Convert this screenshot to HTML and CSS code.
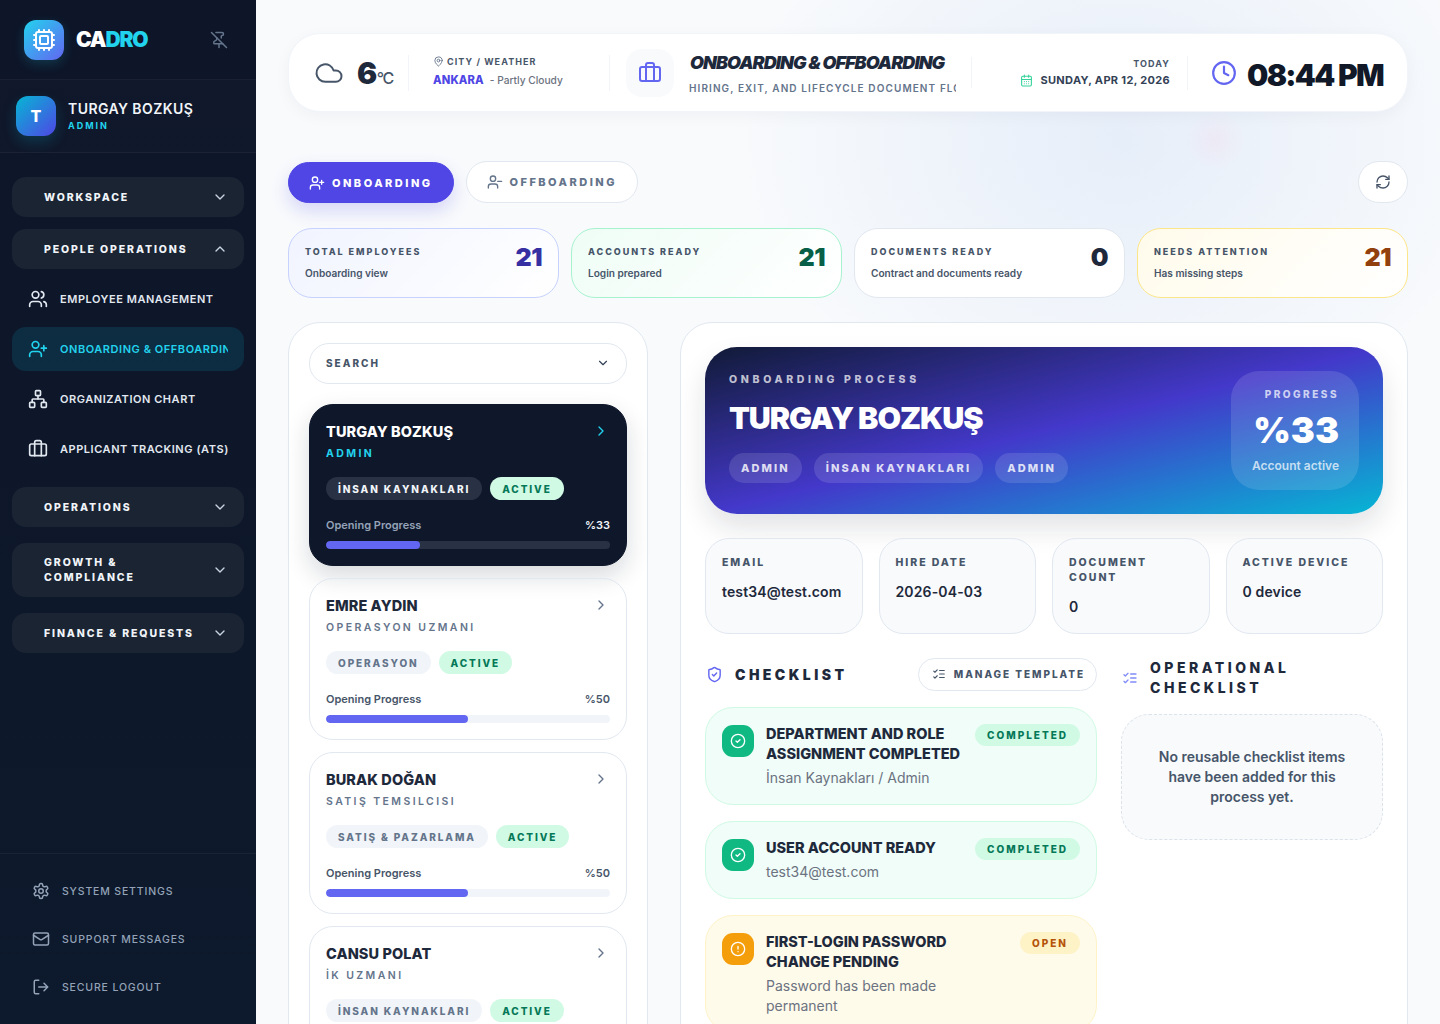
FILE: index.html
```html
<!DOCTYPE html>
<html lang="en">
<head>
<meta charset="utf-8">
<title>Cadro</title>
<link rel="stylesheet" href="styles.css">
</head>
<body>
<svg class="sprite" xmlns="http://www.w3.org/2000/svg">
<symbol id="cpu" viewBox="0 0 24 24"><rect width="16" height="16" x="4" y="4" rx="2"/><rect width="8" height="8" x="8" y="8" rx="1"/><path d="M12 2v2M12 20v2M2 12h2M20 12h2M17 2v2M17 20v2M2 17h2M2 7h2M20 17h2M20 7h2M7 2v2M7 20v2"/></symbol>
<symbol id="pinoff" viewBox="0 0 24 24"><path d="M12 17v5"/><path d="M15 9.34V7a1 1 0 0 1 1-1 2 2 0 0 0 0-4H7.89"/><path d="m2 2 20 20"/><path d="M9 9v1.76a2 2 0 0 1-1.11 1.79l-1.78.9A2 2 0 0 0 5 15.24V16a1 1 0 0 0 1 1h11"/></symbol>
<symbol id="down" viewBox="0 0 24 24"><path d="m6 9 6 6 6-6"/></symbol>
<symbol id="up" viewBox="0 0 24 24"><path d="m18 15-6-6-6 6"/></symbol>
<symbol id="right" viewBox="0 0 24 24"><path d="m9 18 6-6-6-6"/></symbol>
<symbol id="users" viewBox="0 0 24 24"><path d="M16 21v-2a4 4 0 0 0-4-4H6a4 4 0 0 0-4 4v2"/><circle cx="9" cy="7" r="4"/><path d="M22 21v-2a4 4 0 0 0-3-3.87"/><path d="M16 3.13a4 4 0 0 1 0 7.75"/></symbol>
<symbol id="userplus" viewBox="0 0 24 24"><path d="M16 21v-2a4 4 0 0 0-4-4H6a4 4 0 0 0-4 4v2"/><circle cx="9" cy="7" r="4"/><path d="M19 8v6M22 11h-6"/></symbol>
<symbol id="userminus" viewBox="0 0 24 24"><path d="M16 21v-2a4 4 0 0 0-4-4H6a4 4 0 0 0-4 4v2"/><circle cx="9" cy="7" r="4"/><path d="M22 11h-6"/></symbol>
<symbol id="network" viewBox="0 0 24 24"><rect x="16" y="16" width="6" height="6" rx="1"/><rect x="2" y="16" width="6" height="6" rx="1"/><rect x="9" y="2" width="6" height="6" rx="1"/><path d="M5 16v-3a1 1 0 0 1 1-1h12a1 1 0 0 1 1 1v3"/><path d="M12 12V8"/></symbol>
<symbol id="briefcase" viewBox="0 0 24 24"><path d="M16 20V4a2 2 0 0 0-2-2h-4a2 2 0 0 0-2 2v16"/><rect width="20" height="14" x="2" y="6" rx="2"/></symbol>
<symbol id="settings" viewBox="0 0 24 24"><path d="M12.22 2h-.44a2 2 0 0 0-2 2v.18a2 2 0 0 1-1 1.73l-.43.25a2 2 0 0 1-2 0l-.15-.08a2 2 0 0 0-2.73.73l-.22.38a2 2 0 0 0 .73 2.73l.15.1a2 2 0 0 1 1 1.72v.51a2 2 0 0 1-1 1.74l-.15.09a2 2 0 0 0-.73 2.73l.22.38a2 2 0 0 0 2.73.73l.15-.08a2 2 0 0 1 2 0l.43.25a2 2 0 0 1 1 1.73V20a2 2 0 0 0 2 2h.44a2 2 0 0 0 2-2v-.18a2 2 0 0 1 1-1.73l.43-.25a2 2 0 0 1 2 0l.15.08a2 2 0 0 0 2.73-.73l.22-.39a2 2 0 0 0-.73-2.73l-.15-.08a2 2 0 0 1-1-1.74v-.5a2 2 0 0 1 1-1.74l.15-.09a2 2 0 0 0 .73-2.73l-.22-.38a2 2 0 0 0-2.73-.73l-.15.08a2 2 0 0 1-2 0l-.43-.25a2 2 0 0 1-1-1.73V4a2 2 0 0 0-2-2z"/><circle cx="12" cy="12" r="3"/></symbol>
<symbol id="mail" viewBox="0 0 24 24"><rect width="20" height="16" x="2" y="4" rx="2"/><path d="m22 7-8.97 5.7a1.94 1.94 0 0 1-2.06 0L2 7"/></symbol>
<symbol id="logout" viewBox="0 0 24 24"><path d="M9 21H5a2 2 0 0 1-2-2V5a2 2 0 0 1 2-2h4"/><path d="m16 17 5-5-5-5M21 12H9"/></symbol>
<symbol id="cloud" viewBox="0 0 24 24"><path d="M17.5 19H9a7 7 0 1 1 6.71-9h1.79a4.5 4.5 0 1 1 0 9Z"/></symbol>
<symbol id="mappin" viewBox="0 0 24 24"><path d="M20 10c0 6-8 12-8 12s-8-6-8-12a8 8 0 0 1 16 0Z"/><circle cx="12" cy="10" r="3"/></symbol>
<symbol id="calendar" viewBox="0 0 24 24"><path d="M8 2v4M16 2v4"/><rect width="18" height="18" x="3" y="4" rx="2"/><path d="M3 10h18M8 14h.01M12 14h.01M16 14h.01M8 18h.01M12 18h.01M16 18h.01"/></symbol>
<symbol id="clock" viewBox="0 0 24 24"><circle cx="12" cy="12" r="10"/><path d="M12 6v6l4 2"/></symbol>
<symbol id="refresh" viewBox="0 0 24 24"><path d="M3 12a9 9 0 0 1 9-9 9.75 9.75 0 0 1 6.74 2.74L21 8"/><path d="M21 3v5h-5"/><path d="M21 12a9 9 0 0 1-9 9 9.75 9.75 0 0 1-6.74-2.74L3 16"/><path d="M8 16H3v5"/></symbol>
<symbol id="shield" viewBox="0 0 24 24"><path d="M20 13c0 5-3.5 7.5-7.66 8.95a1 1 0 0 1-.67-.01C7.5 20.5 4 18 4 13V6a1 1 0 0 1 1-1c2 0 4.5-1.2 6.24-2.72a1.17 1.17 0 0 1 1.52 0C14.51 3.81 17 5 19 5a1 1 0 0 1 1 1z"/><path d="m9 12 2 2 4-4"/></symbol>
<symbol id="listchecks" viewBox="0 0 24 24"><path d="m3 17 2 2 4-4"/><path d="m3 7 2 2 4-4"/><path d="M13 6h8M13 12h8M13 18h8"/></symbol>
<symbol id="check" viewBox="0 0 24 24"><circle cx="12" cy="12" r="10"/><path d="m9 12 2 2 4-4"/></symbol>
<symbol id="alert" viewBox="0 0 24 24"><circle cx="12" cy="12" r="10"/><path d="M12 8v4M12 16h.01"/></symbol>
</svg>

<div class="app">
  <aside class="sidebar">
    <div class="brand">
      <div class="logo"><svg class="ico ico-24"><use href="#cpu"/></svg></div>
      <div class="brand-name">CA<span>DRO</span></div>
      <svg class="ico ico-18 pin"><use href="#pinoff"/></svg>
    </div>
    <div class="profile">
      <div class="avatar">T</div>
      <div>
        <div class="profile-name">TURGAY BOZKUŞ</div>
        <div class="profile-role">ADMIN</div>
      </div>
    </div>
    <nav class="nav">
      <div class="group group-first"><span>WORKSPACE</span><svg class="ico ico-16"><use href="#down"/></svg></div>
      <div class="group"><span>PEOPLE OPERATIONS</span><svg class="ico ico-16"><use href="#up"/></svg></div>
      <div class="items">
        <div class="item"><svg class="ico ico-20"><use href="#users"/></svg><span>EMPLOYEE MANAGEMENT</span></div>
        <div class="item item-active"><svg class="ico ico-20"><use href="#userplus"/></svg><span>ONBOARDING &amp; OFFBOARDING</span></div>
        <div class="item"><svg class="ico ico-20"><use href="#network"/></svg><span>ORGANIZATION CHART</span></div>
        <div class="item"><svg class="ico ico-20"><use href="#briefcase"/></svg><span>APPLICANT TRACKING (ATS)</span></div>
      </div>
      <div class="group"><span>OPERATIONS</span><svg class="ico ico-16"><use href="#down"/></svg></div>
      <div class="group group-tall"><span>GROWTH &amp;<br>COMPLIANCE</span><svg class="ico ico-16"><use href="#down"/></svg></div>
      <div class="group"><span>FINANCE &amp; REQUESTS</span><svg class="ico ico-16"><use href="#down"/></svg></div>
    </nav>
    <div class="side-foot">
      <div class="foot-item"><svg class="ico ico-18"><use href="#settings"/></svg><span>SYSTEM SETTINGS</span></div>
      <div class="foot-item"><svg class="ico ico-18"><use href="#mail"/></svg><span>SUPPORT MESSAGES</span></div>
      <div class="foot-item"><svg class="ico ico-18"><use href="#logout"/></svg><span>SECURE LOGOUT</span></div>
    </div>
  </aside>

  <main class="main">
    <header class="topbar">
      <div class="weather">
        <svg class="ico cloud-ico"><use href="#cloud"/></svg>
        <div class="temp">6<span>°C</span></div>
      </div>
      <div class="city">
        <div class="city-label"><svg class="ico ico-11"><use href="#mappin"/></svg>CITY / WEATHER</div>
        <div class="city-line"><b>ANKARA</b><span>- Partly Cloudy</span></div>
      </div>
      <div class="page-icon"><svg class="ico ico-24"><use href="#briefcase"/></svg></div>
      <div class="page-title">
        <h1>ONBOARDING &amp; OFFBOARDING</h1>
        <p>HIRING, EXIT, AND LIFECYCLE DOCUMENT FLOW</p>
      </div>
      <div class="today">
        <div class="today-label">TODAY</div>
        <div class="today-date"><svg class="ico ico-13"><use href="#calendar"/></svg>SUNDAY, APR 12, 2026</div>
      </div>
      <div class="time"><svg class="ico ico-26"><use href="#clock"/></svg><span>08:44 PM</span></div>
    </header>

    <div class="tabs">
      <button class="tab tab-on"><svg class="ico ico-16"><use href="#userplus"/></svg>ONBOARDING</button>
      <button class="tab"><svg class="ico ico-16"><use href="#userminus"/></svg>OFFBOARDING</button>
      <button class="refresh"><svg class="ico ico-16"><use href="#refresh"/></svg></button>
    </div>

    <section class="stats">
      <div class="stat stat-indigo"><div><h3>TOTAL EMPLOYEES</h3><p>Onboarding view</p></div><strong>21</strong></div>
      <div class="stat stat-green"><div><h3>ACCOUNTS READY</h3><p>Login prepared</p></div><strong>21</strong></div>
      <div class="stat stat-plain"><div><h3>DOCUMENTS READY</h3><p>Contract and documents ready</p></div><strong>0</strong></div>
      <div class="stat stat-amber"><div><h3>NEEDS ATTENTION</h3><p>Has missing steps</p></div><strong>21</strong></div>
    </section>

    <section class="columns">
      <div class="panel list-panel">
        <div class="search"><span>SEARCH</span><svg class="ico ico-14"><use href="#down"/></svg></div>
        <article class="person person-on">
          <div class="person-head"><h4>TURGAY BOZKUŞ</h4><svg class="ico ico-16"><use href="#right"/></svg></div>
          <div class="person-role">ADMIN</div>
          <div class="chips"><span class="chip">İNSAN KAYNAKLARI</span><span class="chip chip-green">ACTIVE</span></div>
          <div class="prog-row"><span>Opening Progress</span><span class="prog-val">%33</span></div>
          <div class="bar"><i class="fill" style="width:33%"></i></div>
        </article>
        <article class="person">
          <div class="person-head"><h4>EMRE AYDIN</h4><svg class="ico ico-16"><use href="#right"/></svg></div>
          <div class="person-role">OPERASYON UZMANI</div>
          <div class="chips"><span class="chip">OPERASYON</span><span class="chip chip-green">ACTIVE</span></div>
          <div class="prog-row"><span>Opening Progress</span><span class="prog-val">%50</span></div>
          <div class="bar"><i class="fill" style="width:50%"></i></div>
        </article>
        <article class="person">
          <div class="person-head"><h4>BURAK DOĞAN</h4><svg class="ico ico-16"><use href="#right"/></svg></div>
          <div class="person-role">SATIŞ TEMSILCISI</div>
          <div class="chips"><span class="chip">SATIŞ &amp; PAZARLAMA</span><span class="chip chip-green">ACTIVE</span></div>
          <div class="prog-row"><span>Opening Progress</span><span class="prog-val">%50</span></div>
          <div class="bar"><i class="fill" style="width:50%"></i></div>
        </article>
        <article class="person">
          <div class="person-head"><h4>CANSU POLAT</h4><svg class="ico ico-16"><use href="#right"/></svg></div>
          <div class="person-role">İK UZMANI</div>
          <div class="chips"><span class="chip">İNSAN KAYNAKLARI</span><span class="chip chip-green">ACTIVE</span></div>
          <div class="prog-row"><span>Opening Progress</span><span class="prog-val">%50</span></div>
          <div class="bar"><i class="fill" style="width:50%"></i></div>
        </article>
      </div>

      <div class="panel detail-panel">
        <div class="hero">
          <div class="hero-main">
            <div class="hero-eyebrow">ONBOARDING PROCESS</div>
            <h2>TURGAY BOZKUŞ</h2>
            <div class="hero-tags"><span>ADMIN</span><span>İNSAN KAYNAKLARI</span><span>ADMIN</span></div>
          </div>
          <div class="hero-box">
            <div class="hero-box-label">PROGRESS</div>
            <div class="hero-box-val">%33</div>
            <div class="hero-box-sub">Account active</div>
          </div>
        </div>

        <div class="infos">
          <div class="info"><h5>EMAIL</h5><p>test34@test.com</p></div>
          <div class="info"><h5>HIRE DATE</h5><p>2026-04-03</p></div>
          <div class="info"><h5>DOCUMENT COUNT</h5><p>0</p></div>
          <div class="info"><h5>ACTIVE DEVICE</h5><p>0 device</p></div>
        </div>

        <div class="lists">
          <div class="checklist">
            <div class="check-head">
              <div class="check-title"><svg class="ico ico-17 indigo"><use href="#shield"/></svg><span>CHECKLIST</span></div>
              <button class="manage"><svg class="ico ico-14"><use href="#listchecks"/></svg>MANAGE TEMPLATE</button>
            </div>
            <div class="task task-done">
              <div class="task-ico"><svg class="ico ico-16"><use href="#check"/></svg></div>
              <div class="task-body"><h6>DEPARTMENT AND ROLE ASSIGNMENT COMPLETED</h6><p>İnsan Kaynakları / Admin</p></div>
              <span class="badge">COMPLETED</span>
            </div>
            <div class="task task-done">
              <div class="task-ico"><svg class="ico ico-16"><use href="#check"/></svg></div>
              <div class="task-body"><h6>USER ACCOUNT READY</h6><p>test34@test.com</p></div>
              <span class="badge">COMPLETED</span>
            </div>
            <div class="task task-open">
              <div class="task-ico"><svg class="ico ico-16"><use href="#alert"/></svg></div>
              <div class="task-body"><h6>FIRST-LOGIN PASSWORD CHANGE PENDING</h6><p>Password has been made permanent</p></div>
              <span class="badge">OPEN</span>
            </div>
          </div>
          <div class="oper">
            <div class="oper-head"><svg class="ico ico-16 indigo-soft"><use href="#listchecks"/></svg><span>OPERATIONAL CHECKLIST</span></div>
            <div class="empty">No reusable checklist items have been added for this process yet.</div>
          </div>
        </div>
      </div>
    </section>
  </main>
</div>
</body>
</html>
```
FILE: styles.css
```css
* { box-sizing: border-box; margin: 0; padding: 0; }
html, body { width: 1440px; height: 1024px; overflow: hidden; }
body {
  font-family: "Inter", "Liberation Sans", sans-serif;
  color: #1e293b;
  background:
    radial-gradient(circle 30px at 1215px 140px, rgba(244, 200, 225, .2), transparent),
    radial-gradient(ellipse 380px 300px at 1120px 140px, rgba(224, 234, 248, .75), transparent),
    #f8fafc;
}
.sprite { display: none; }
.ico { display: block; flex: none; fill: none; stroke: currentColor; stroke-width: 2; stroke-linecap: round; stroke-linejoin: round; }
.ico-11 { width: 11px; height: 11px; }
.ico-13 { width: 13px; height: 13px; }
.ico-14 { width: 14px; height: 14px; }
.ico-16 { width: 16px; height: 16px; }
.ico-17 { width: 17px; height: 17px; }
.ico-18 { width: 18px; height: 18px; }
.ico-20 { width: 20px; height: 20px; }
.ico-24 { width: 24px; height: 24px; }
.ico-26 { width: 26px; height: 26px; }
.app { display: flex; height: 1024px; }

/* sidebar */
.sidebar { width: 256px; flex: none; height: 1024px; display: flex; flex-direction: column; background: linear-gradient(180deg, #0e1528 0%, #0e182b 60%, #0d192c 100%); }
.brand { height: 80px; display: flex; align-items: center; padding: 0 28px 0 24px; border-bottom: 1px solid rgba(255, 255, 255, .05); }
.logo { width: 40px; height: 40px; border-radius: 12px; background: linear-gradient(135deg, #22d3ee, #6366f1); display: flex; align-items: center; justify-content: center; color: #fff; box-shadow: 0 4px 12px rgba(34, 211, 238, .18); }
.brand-name { margin-left: 12px; font-size: 21px; font-weight: 900; letter-spacing: -.055em; color: #fff; }
.brand-name span { color: #22d3ee; }
.pin { margin-left: auto; color: #64748b; }
.profile { height: 73px; display: flex; align-items: center; gap: 12px; padding: 0 16px; border-bottom: 1px solid rgba(255, 255, 255, .05); background: rgba(255, 255, 255, .012); }
.avatar { width: 40px; height: 40px; border-radius: 12px; background: linear-gradient(135deg, #06b6d4, #4f46e5); color: #fff; font-size: 16px; font-weight: 800; display: flex; align-items: center; justify-content: center; box-shadow: 0 6px 14px rgba(6, 182, 212, .2); }
.profile-name { font-size: 14px; line-height: 18px; font-weight: 600; letter-spacing: .03em; color: #f1f5f9; }
.profile-role { margin-top: 1px; font-size: 9px; line-height: 13px; font-weight: 700; letter-spacing: .22em; color: #22d3ee; }
.nav { padding: 24px 12px 0; display: flex; flex-direction: column; gap: 16px; }
.group { min-height: 40px; border-radius: 14px; background: #1a2433; display: flex; align-items: center; justify-content: space-between; padding: 0 16px 0 32px; font-size: 10.5px; line-height: 15px; font-weight: 800; letter-spacing: .18em; color: #f1f5f9; }
.group-first { margin-bottom: -4px; }
.group-tall { min-height: 54px; }
.group .ico { color: #cbd5e1; }
.items { display: flex; flex-direction: column; gap: 6px; margin: -8px 0 0; }
.item { height: 44px; display: flex; align-items: center; gap: 12px; padding: 0 16px; border-radius: 14px; font-size: 11px; font-weight: 600; letter-spacing: .05em; color: #e2e8f0; white-space: nowrap; overflow: hidden; }
.item span { overflow: hidden; }
.item-active { background: rgba(6, 182, 212, .14); color: #22d3ee; }
.side-foot { margin-top: auto; height: 171px; padding-top: 13px; border-top: 1px solid rgba(255, 255, 255, .05); display: flex; flex-direction: column; }
.foot-item { height: 48px; flex: none; display: flex; align-items: center; gap: 12px; padding-left: 32px; font-size: 10.5px; font-weight: 500; letter-spacing: .08em; color: #94a3b8; }

/* main */
.main { flex: 1; min-width: 0; padding: 33px 32px 0; height: 1024px; overflow: hidden; }
.topbar { height: 79px; border-radius: 32px; background: #fff; box-shadow: 0 4px 16px rgba(15, 23, 42, .04); border: 1px solid #f1f5f9; display: flex; align-items: center; padding-left: 25px; padding-right: 23px; }
.weather { display: flex; align-items: center; gap: 13px; height: 36px; width: 95px; flex: none; border-right: 1px solid #f1f5f9; }
.cloud-ico { width: 30px; height: 30px; stroke-width: 1.6; color: #475569; }
.temp { padding-top: 6px; font-size: 30px; line-height: 36px; font-weight: 900; color: #1e293b; letter-spacing: -.02em; display: flex; align-items: baseline; }
.temp span { font-size: 16px; font-weight: 500; color: #475569; letter-spacing: -.08em; }
.city { margin-left: 24px; width: 177px; flex: none; height: 36px; border-right: 1px solid #f1f5f9; }
.city-label { display: flex; align-items: center; gap: 3px; font-size: 9px; line-height: 13px; font-weight: 700; letter-spacing: .12em; color: #475569; }
.city-label .ico { color: #64748b; }
.city-line { margin-top: 5px; display: flex; gap: 6px; align-items: baseline; line-height: 15px; }
.city-line b { font-size: 11.2px; font-weight: 800; color: #4f46e5; letter-spacing: .01em; }
.city-line span { font-size: 10.2px; font-weight: 500; color: #6b7280; }
.page-icon { margin-left: 16px; width: 48px; height: 48px; flex: none; border-radius: 16px; background: #f8fafc; color: #6366f1; display: flex; align-items: center; justify-content: center; }
.page-title { margin-left: 15px; width: 267px; flex: none; overflow: hidden; }
.page-title h1 { padding-left: 1px; font-size: 18px; line-height: 24px; font-weight: 900; font-style: italic; letter-spacing: -.052em; color: #1e293b; white-space: nowrap; }
.page-title p { margin-top: 6px; font-size: 10px; line-height: 14px; font-weight: 600; letter-spacing: .11em; color: #64748b; white-space: nowrap; }
.today { margin-left: 15px; padding-left: 30px; width: 199px; flex: none; text-align: right; border-left: 1px solid #f1f5f9; }
.today-label { font-size: 9px; line-height: 13px; font-weight: 700; letter-spacing: .12em; color: #475569; }
.today-date { margin-top: 3px; display: flex; justify-content: flex-end; align-items: center; gap: 7px; font-size: 11px; line-height: 15px; font-weight: 700; letter-spacing: .03em; color: #334155; white-space: nowrap; }
.today-date .ico { color: #34d399; }
.time { margin-left: 17px; padding-left: 23px; height: 34px; border-left: 1px solid #f1f5f9; display: flex; align-items: center; gap: 10px; color: #6366f1; white-space: nowrap; }
.time span { margin-top: 4px; font-size: 30px; line-height: 34px; font-weight: 900; letter-spacing: -.056em; color: #111827; }

.tabs { margin-top: 49px; display: flex; align-items: center; gap: 12px; }
.tab { height: 42px; border-radius: 21px; padding: 0 20px; display: flex; align-items: center; gap: 7px; font-family: inherit; font-size: 11px; font-weight: 800; letter-spacing: .225em; background: #fff; color: #64748b; border: 1px solid #e2e8f0; }
.tab-on { height: 41px; align-self: flex-end; background: #4f46e5; color: #fff; border-color: #4f46e5; box-shadow: 0 8px 18px rgba(79, 70, 229, .2); }
.refresh { margin-left: auto; width: 50px; height: 42px; border-radius: 21px; background: #fff; border: 1px solid #e2e8f0; color: #475569; display: flex; align-items: center; justify-content: center; }
.stats { margin-top: 25px; display: grid; grid-template-columns: repeat(4, 1fr); gap: 12px; }
.stat { height: 70px; border-radius: 24px; border: 1px solid #e2e8f0; padding: 16px; display: flex; justify-content: space-between; align-items: flex-start; background: #fff; }
.stat h3 { font-size: 9px; line-height: 13px; font-weight: 800; letter-spacing: .22em; color: #475569; }
.stat p { margin-top: 8px; font-size: 10.1px; line-height: 15px; font-weight: 600; color: #475569; }
.stat strong { font-size: 25px; line-height: 25px; font-weight: 900; color: #1e293b; letter-spacing: -.02em; }
.stat-indigo { border-color: #c7d2fe; background: linear-gradient(135deg, #f1f4ff, #fff); }
.stat-indigo strong { color: #3730a3; }
.stat-green { border-color: #a7f3d0; background: linear-gradient(135deg, #effdf6, #fff); }
.stat-green strong { color: #065f46; }
.stat-amber { border-color: #fde68a; background: linear-gradient(135deg, #fffbeb, #fff); }
.stat-amber strong { color: #92400e; }

.columns { margin-top: 24px; display: grid; grid-template-columns: 360px 728px; gap: 32px; align-items: stretch; }
.panel { border: 1px solid #e2e8f0; border-radius: 32px; background: #fff; }
.list-panel { padding: 20px; display: flex; flex-direction: column; gap: 12px; }
.search { height: 41px; margin-bottom: 8px; border: 1px solid #e2e8f0; border-radius: 20px; padding: 0 16px 1px; display: flex; align-items: center; justify-content: space-between; font-size: 10px; font-weight: 800; letter-spacing: .2em; color: #475569; }
.search .ico { color: #334155; }
.person { height: 162px; flex: none; border: 1px solid #e2e8f0; border-radius: 24px; padding: 17px 16px 0; }
.person-on { background: #0f172a; border-color: #0f172a; box-shadow: 0 10px 24px rgba(15, 23, 42, .16); }
.person-head { display: flex; justify-content: space-between; align-items: center; height: 20px; }
.person-head h4 { font-size: 14.5px; line-height: 20px; font-weight: 800; letter-spacing: .006em; color: #1e293b; }
.person-head .ico { color: #64748b; margin-right: 1px; margin-top: -2px; }
.person-role { margin-top: 4px; font-size: 10.5px; line-height: 16px; font-weight: 600; letter-spacing: .23em; color: #64748b; }
.chips { margin-top: 15px; display: flex; gap: 8px; }
.chip { height: 23px; border-radius: 12px; padding: 0 12px; display: flex; align-items: center; background: #f1f5f9; color: #64748b; font-size: 10px; font-weight: 800; letter-spacing: .19em; }
.chip-green { background: #d1fae5; color: #047857; }
.prog-row { margin-top: 17px; display: flex; justify-content: space-between; font-size: 11px; line-height: 16px; font-weight: 600; color: #475569; }
.bar { margin-top: 8px; height: 8px; border-radius: 4px; background: #f1f5f9; overflow: hidden; }
.fill { display: block; height: 100%; border-radius: 4px; background: #6366f1; }
.person-on h4 { color: #fff; }
.person-on .person-head .ico { color: #22d3ee; }
.person-on .person-role { color: #22d3ee; font-weight: 700; }
.person-on .chip:first-child { background: #293244; color: #f1f5f9; }
.person-on .prog-row { color: #94a3b8; }
.person-on .prog-val { color: #f1f5f9; }
.person-on .bar { background: #293244; }

.detail-panel { padding: 24px; }
.hero { height: 167px; border-radius: 32px; padding: 24px; display: flex; justify-content: space-between; color: #fff; background: linear-gradient(to bottom right, #111a36 0%, #4338ca 50%, #06b6d4 100%); box-shadow: 0 14px 28px rgba(15, 23, 42, .12); }
.hero-eyebrow { margin-top: 2px; font-size: 10.5px; line-height: 14px; font-weight: 800; letter-spacing: .35em; color: rgba(255, 255, 255, .72); }
.hero h2 { margin-top: 11px; font-size: 30.5px; line-height: 40px; font-weight: 900; letter-spacing: -.035em; color: #fff; }
.hero-tags { margin-top: 15px; display: flex; gap: 12px; }
.hero-tags span { height: 30px; border-radius: 15px; padding: 0 12px; display: flex; align-items: center; background: rgba(255, 255, 255, .12); font-size: 11px; font-weight: 800; letter-spacing: .19em; color: rgba(255, 255, 255, .82); }
.hero-box { width: 128px; height: 119px; border-radius: 28px; background: rgba(255, 255, 255, .12); padding: 16px 20px 0; text-align: right; }
.hero-box-label { font-size: 10px; line-height: 14px; font-weight: 800; letter-spacing: .25em; color: rgba(255, 255, 255, .72); white-space: nowrap; }
.hero-box-val { margin-top: 7px; font-size: 36px; line-height: 44px; font-weight: 900; color: #fff; }
.hero-box-sub { margin-top: 6px; font-size: 12px; line-height: 16px; font-weight: 600; color: rgba(255, 255, 255, .72); white-space: nowrap; }
.infos { margin-top: 24px; display: grid; grid-template-columns: repeat(4, 1fr); gap: 16px; }
.info { height: 96px; border: 1px solid #e2e8f0; border-radius: 24px; background: #f8fafc; padding: 16px; }
.info h5 { font-size: 10.5px; line-height: 15px; font-weight: 800; letter-spacing: .185em; color: #475569; }
.info p { margin-top: 12px; font-size: 14px; line-height: 20px; font-weight: 600; letter-spacing: .01em; color: #1e293b; }
.lists { margin-top: 24px; display: grid; grid-template-columns: 392px 1fr; gap: 24px; align-items: start; }
.checklist { display: flex; flex-direction: column; gap: 16px; }
.check-head { height: 33px; display: flex; align-items: center; justify-content: space-between; }
.check-title { display: flex; align-items: center; gap: 12px; font-size: 14px; font-weight: 900; letter-spacing: .245em; color: #1e293b; padding-left: 1px; }
.indigo { color: #6366f1; }
.indigo-soft { color: #818cf8; }
.manage { height: 33px; border-radius: 17px; border: 1px solid #e2e8f0; background: #fff; padding: 0 11px 1px 13px; display: flex; align-items: center; gap: 8px; font-family: inherit; font-size: 10px; font-weight: 800; letter-spacing: .195em; color: #475569; }
.task { border-radius: 28px; padding: 16px; display: flex; align-items: flex-start; gap: 12px; border: 1px solid #d1fae5; background: #f0fdf9; }
.task-ico { width: 32px; height: 32px; flex: none; border-radius: 11px; color: #fff; display: flex; align-items: center; justify-content: center; background: #10b981; margin-top: 1px; }
.task-body { flex: 1; min-width: 0; }
.task h6 { font-size: 14.5px; line-height: 20px; font-weight: 800; color: #1e293b; }
.task p { margin-top: 4px; font-size: 14px; line-height: 20px; color: #6b7280; }
.badge { flex: none; height: 22px; border-radius: 11px; padding: 0 12px; display: flex; align-items: center; font-size: 10px; font-weight: 800; letter-spacing: .2em; background: #d1fae5; color: #047857; }
.task-open { background: #fffbeb; border-color: #fef3c7; }
.task-open .task-ico { background: #f59e0b; }
.task-open .badge { background: #fef3c7; color: #b45309; }
.oper { display: flex; flex-direction: column; gap: 16px; }
.oper-head { display: flex; align-items: center; gap: 12px; font-size: 14px; line-height: 20px; font-weight: 800; letter-spacing: .25em; color: #1e293b; padding-left: 1px; }
.empty { border: 1px dashed #dbe2ea; border-radius: 28px; background: #f8fafc; padding: 32px 24px; text-align: center; font-size: 14px; line-height: 20px; font-weight: 600; color: #475569; }
```
